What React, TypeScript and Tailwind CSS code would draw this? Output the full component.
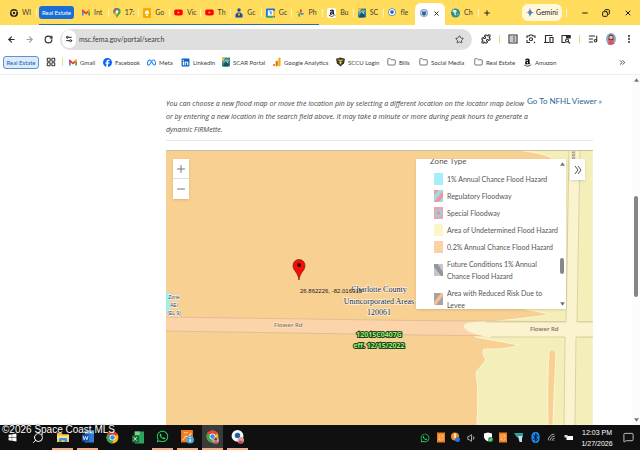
import type { ReactNode } from "react";
import {
  ArrowLeft, ArrowRight, RotateCw, Star, Puzzle, Plus, Minus, X, Copy, Folder,
  LayoutGrid, MessageSquare, Search, Volume1, Wifi, ChevronsRight, ListMusic,
  Settings2, EllipsisVertical,
} from "lucide-react";
import { FaFacebook, FaLinkedin, FaMeta, FaWhatsapp, FaAmazon, FaBluetooth, FaYoutube, FaWindows } from "react-icons/fa6";

const Gmail = () => (
  <svg viewBox="0 0 24 18" className="h-[7px] w-2 shrink-0">
    <path d="M0 3v15h5V8z" fill="#4285f4" /><path d="M24 3v15h-5V8z" fill="#34a853" />
    <path d="M0 2q0-3 4-1l8 7 8-7q4-2 4 1v4L12 15 0 6z" fill="#ea4335" />
    <path d="M19 2l2-2q3 0 3 3v3l-5 4z" fill="#fbbc04" />
  </svg>
);
const MapPin = () => (
  <svg viewBox="0 0 16 22" className="h-[10px] w-2 shrink-0">
    <path d="M8 22C6 15 0 13 0 8a8 8 0 0 1 16 0c0 5-6 7-8 14z" fill="#34a853" />
    <path d="M0 8a8 8 0 0 1 12-7L2 13Q0 10 0 8z" fill="#4285f4" />
    <path d="M1 4a8 8 0 0 1 5-4l2 5-4 4z" fill="#ea4335" />
    <path d="M2 13l5-6 4 4-6 7z" fill="#fbbc04" /><circle cx="8" cy="8" r="3" fill="#fff" />
  </svg>
);
const Keep = () => (
  <svg viewBox="0 0 16 20" className="h-[10px] w-2 shrink-0">
    <rect width="16" height="20" rx="2" fill="#f9ab00" /><circle cx="8" cy="9" r="4" fill="#fff" /><path d="M6 14h4v2H6z" fill="#fff" />
  </svg>
);
const Person = () => (
  <svg viewBox="0 0 16 20" className="h-[10px] w-2 shrink-0">
    <circle cx="8" cy="4" r="3.5" fill="#174ea6" /><path d="M1 19v-6l4-4h6l4 4v6z" fill="#174ea6" /><path d="M6 11h4v4H6z" fill="#fbbc04" />
  </svg>
);
const Calendar = () => (
  <svg viewBox="0 0 20 20" className="h-[10px] w-[9px] shrink-0">
    <rect width="20" height="20" rx="2" fill="#1a73e8" /><path d="M15 5h5v10l-5 5z" fill="#fbbc04" /><path d="M2 15h13v5H2z" fill="#34a853" />
    <rect x="4" y="4" width="12" height="12" fill="#fff" /><path d="M7 7h3v6M12 7v6" stroke="#1a73e8" strokeWidth="1.5" fill="none" />
  </svg>
);
const Photos = () => (
  <svg viewBox="0 0 20 20" className="h-[10px] w-2 shrink-0">
    <path d="M10 10V0q5 1 5 5t-5 5z" fill="#ea4335" /><path d="M10 10h10q-1 5-5 5t-5-5z" fill="#4285f4" />
    <path d="M10 10v10q-5-1-5-5t5-5z" fill="#34a853" /><path d="M10 10H0q1-5 5-5t5 5z" fill="#fbbc04" />
  </svg>
);
const AmazonBox = () => (
  <span className="flex h-[10px] w-[9px] shrink-0 items-center justify-center rounded-xs bg-white"><FaAmazon className="size-2 text-black" /></span>
);
const Scar = () => (
  <svg viewBox="0 0 18 20" className="h-[10px] w-2 shrink-0">
    <path d="M0 0h18v20H0z" fill="#2f8297" /><path d="M0 0h8L3 8H0z" fill="#e4c04a" /><path d="M9 3l8 2-5 6z" fill="#7fc46b" />
    <path d="M2 20l6-10 8 3-2 7z" fill="#17506b" /><path d="M1 12l7-6 6 7" stroke="#e9f2dc" strokeWidth="1.5" fill="none" />
  </svg>
);
const Seal = () => (
  <svg viewBox="0 0 20 20" className="h-[10px] w-2 shrink-0">
    <circle cx="10" cy="10" r="10" fill="#8fa9c8" /><circle cx="10" cy="10" r="7.5" fill="#c3d6ea" />
    <path d="M4 5q6 4 12 0l-2 4 1 4-5 4-5-4 1-4z" fill="#2c5c93" />
  </svg>
);
const Pointer = () => (
  <svg viewBox="0 0 20 24" className="h-[10px] w-2 shrink-0">
    <circle cx="10" cy="10" r="9" fill="#fff" stroke="#4c77b5" strokeWidth="2" /><path d="M6 6h8v5l-4 5-4-5z" fill="#1e5fb4" />
  </svg>
);
const Globe = ({ c }: { c: string }) => (
  <svg viewBox="0 0 20 20" className="h-[10px] w-[9px] shrink-0">
    <circle cx="10" cy="10" r="10" fill={c} /><path d="M5 3q8-1 8 4l-3 3 2 6-4-2-1-5-4-2z" fill="#e1f1dd" /><path d="M14 10q4 0 3 3l-3 3z" fill="#8ac47a" />
  </svg>
);
const Chrome = ({ face }: { face?: boolean }) => (
  <svg viewBox="0 0 24 26" className="h-[14px] w-[13px]">
    <circle cx="12" cy="12" r="11" fill="#fbbc04" /><path d="M12 12L2.500 6.500a11 11 0 0 1 19 0z" fill="#ea4335" />
    <path d="M12 12L2.500 6.500A11 11 0 0 0 11 23l5-9z" fill="#34a853" />
    <circle cx="12" cy="12" r="5.500" fill="#fff" /><circle cx="12" cy="12" r="4.200" fill="#4285f4" />
    {face && <><circle cx="18" cy="19" r="6" fill="#c9a4a0" /><circle cx="18" cy="17" r="2.500" fill="#6d4545" /><path d="M15 21l6 0 1 4h-8z" fill="#d5596b" /></>}
  </svg>
);
const Face = () => (
  <svg viewBox="0 0 20 24" className="h-3 w-[10px]">
    <ellipse cx="10" cy="12" rx="10" ry="12" fill="#8fabc8" /><path d="M5 9a5 6 0 0 1 10 0v6H5z" fill="#6b3b35" />
    <circle cx="10" cy="9" r="3.500" fill="#f0c3a8" /><path d="M3 22l4-8h6l4 7q-7 5-14 1z" fill="#d95566" />
  </svg>
);
const ToolIcon = ({ children }: { children: ReactNode }) => (
  <svg viewBox="0 0 20 20" className="size-[10px]" fill="none" stroke="currentColor" strokeWidth="2.200">{children}</svg>
);

const tabs: { icon: ReactNode; text: string }[] = [
  { icon: <Gmail />, text: "Int" }, { icon: <MapPin />, text: "17:" }, { icon: <Keep />, text: "Go" },
  { icon: <FaYoutube className="size-[9px] shrink-0 text-[#f00]" />, text: "Vic" },
  { icon: <FaYoutube className="size-[9px] shrink-0 text-[#f00]" />, text: "Th" },
  { icon: <Person />, text: "Gc" }, { icon: <Calendar />, text: "Gc" }, { icon: <Photos />, text: "Ph" },
  { icon: <AmazonBox />, text: "Bu" }, { icon: <Scar />, text: "SC" }, { icon: <Pointer />, text: "fle" },
];

const FolderIcon = () => <Folder className="h-[10px] w-[9px] shrink-0 text-[#4b4b4b]" />;
const bookmarks: { icon: ReactNode; text: string; w: string }[] = [
  { icon: <Gmail />, text: "Gmail", w: "w-[34px]" },
  { icon: <FaFacebook className="size-[9px] shrink-0 text-[#0866ff]" />, text: "Facebook", w: "w-11" },
  { icon: <FaMeta className="size-[9px] shrink-0 text-[#0a7cf5]" />, text: "Meta", w: "w-[34px]" },
  { icon: <FaLinkedin className="size-[9px] shrink-0 text-[#0a66c2]" />, text: "LinkedIn", w: "w-[41px]" },
  { icon: <Scar />, text: "SCAR Portal", w: "w-[51px]" },
  {
    icon: <svg viewBox="0 0 18 20" className="h-[10px] w-2 shrink-0"><rect x="12" width="5" height="20" rx="2.500" fill="#f9ab00" /><rect x="6" y="7" width="5" height="13" rx="2.500" fill="#e37400" /><circle cx="2.500" cy="17" r="2.500" fill="#e37400" /></svg>,
    text: "Google Analytics", w: "w-[63px]",
  },
  {
    icon: <svg viewBox="0 0 20 20" className="h-[10px] w-[9px] shrink-0"><path d="M0 3l10-3 10 3-2 10-8 7-8-7z" fill="#3c3c22" /><path d="M3 5h14l-7 5z" fill="#d8b740" /><path d="M7 10h6l-3 6z" fill="#e8d57c" /></svg>,
    text: "SCCU Login", w: "w-[51px]",
  },
  { icon: <FolderIcon />, text: "Bills", w: "w-8" },
  { icon: <FolderIcon />, text: "Social Media", w: "w-[55px]" },
  { icon: <FolderIcon />, text: "Real Estate", w: "w-[49px]" },
  { icon: <FaAmazon className="size-[9px] shrink-0 text-black" />, text: "Amazon", w: "w-10" },
];

const legend: { text: string; swatch: ReactNode }[] = [
  { text: "1% Annual Chance Flood Hazard", swatch: <path d="M0 0h10v12H0z" fill="#a5effd" /> },
  { text: "Regulatory Floodway", swatch: <><path d="M0 0h10v12H0z" fill="#a3d9e2" /><path d="M0 5L5 0H0zM0 12L10 1v6l-5 5z" fill="#f0959b" /></> },
  { text: "Special Floodway", swatch: <><path d="M0 0h10v12H0z" fill="#f0a3a8" /><circle cx="5" cy="6" r="4" fill="#8fd5e2" /><circle cx="5" cy="6" r="2" fill="#f0959b" /></> },
  { text: "Area of Undetermined Flood Hazard", swatch: <path d="M0 0h10v12H0z" fill="#fbf6c8" /> },
  { text: "0.2% Annual Chance Flood Hazard", swatch: <path d="M0 0h10v12H0z" fill="#fdd0a5" /> },
  { text: "Future Conditions 1% Annual Chance Flood Hazard", swatch: <><path d="M0 0h10v12H0z" fill="#c5c7cc" /><path d="M0 0h4l6 8v4H8L0 3z" fill="#94969c" /></> },
  { text: "Area with Reduced Risk Due to Levee", swatch: <><path d="M0 0h10v12H0z" fill="#a5a3a5" /><path d="M0 9L8 0h2v3L2 12H0z" fill="#f5c096" /></> },
];

const Sep = ({ c }: { c: string }) => <span className={`h-2 w-px shrink-0 ${c}`} />;

function Browser() {
  return (
    <header className="shrink-0 text-[7px] text-[#3c3c3c]">
      <div className="flex h-[25px] items-center bg-[#ffdc5c]">
        <div className="flex w-[39px] shrink-0 items-center gap-1 pl-[10px]">
          <svg viewBox="0 0 20 20" className="size-2 shrink-0"><circle cx="10" cy="10" r="8" fill="none" stroke="#222" strokeWidth="4" /><circle cx="10" cy="10" r="3" fill="#222" /><path d="M10 6h9M6 12L2 5M13 12l-4 7" stroke="#ffdc5c" strokeWidth="1.500" /></svg>
          <span className="w-[10px] whitespace-nowrap">Wl</span>
          <Sep c="bg-[#fff3bf]" />
        </div>
        <div className="flex h-[25px] min-w-0 flex-1 items-center">
          <button className="flex h-[13px] w-[35px] shrink-0 items-center justify-center whitespace-nowrap rounded-[3px] bg-[#1a6fd6] text-[6px] text-white">Real Estate</button>
          <div className="relative flex h-[25px] min-w-0 flex-1 items-center pl-1">
            {tabs.map((t, i) => (
              <button key={i} className="flex min-w-0 flex-1 items-center gap-1 pl-1">
                {t.icon}
                <span className="min-w-0 flex-1 whitespace-nowrap text-left">{t.text}</span>
                {i < tabs.length - 1 && <Sep c="bg-[#fff3bf]" />}
              </button>
            ))}
            <span className="absolute right-24 bottom-0 -left-[35px] h-px bg-[#2a6ba5]" />
          </div>
        </div>
        <div className="flex h-[22px] w-[30px] shrink-0 items-center justify-between self-end rounded-t-md bg-white px-[5px] pb-[2px]">
          <Seal />
          <button aria-label="Close tab"><X className="size-[7px] text-[#222]" strokeWidth={3} /></button>
        </div>
        <div className="flex w-[77px] shrink-0 items-center gap-1 pl-[6px]">
          <Globe c="#2d8f8b" /><span className="w-[10px] whitespace-nowrap">Ch</span><Sep c="bg-[#fff3bf]" />
          <button aria-label="New tab"><Plus className="size-2 text-[#222]" strokeWidth={3} /></button>
        </div>
        <button className="flex h-[17px] w-10 shrink-0 items-center justify-center gap-[2px] rounded-md bg-[#fff8dc] text-[#1c1c1c]">
          <svg viewBox="0 0 20 24" className="h-[9px] w-2 shrink-0"><path d="M10 0q1 10 10 12-9 2-10 12Q9 14 0 12 9 10 10 0z" fill="#3b82e8" /><path d="M10 0q1 10 4 10l-8 0q3 0 4-10z" fill="#e5484d" /><path d="M0 12l6-2v4z" fill="#f5b82e" /><path d="M10 24q-1-8-3-10h5q-2 4-2 10z" fill="#34a853" /></svg>
          Gemini
        </button>
        <div className="flex w-[78px] shrink-0 items-center justify-between pr-2 pl-1 text-[#1c1c1c]">
          <Sep c="bg-[#fff3bf]" />
          <button aria-label="Minimize" className="pl-2"><Minus className="size-2" strokeWidth={3} /></button>
          <button aria-label="Restore" className="pl-2"><Copy className="size-2 -scale-x-100" strokeWidth={3} /></button>
          <button aria-label="Close" className="pl-2"><X className="size-2" strokeWidth={3} /></button>
        </div>
      </div>
      <div className="flex h-[25px] items-center pt-[3px] text-[#2b2b2b]">
        <div className="flex w-[60px] shrink-0 items-center justify-around px-[2px]">
          <button aria-label="Back"><ArrowLeft className="size-[9px]" strokeWidth={3} /></button>
          <button aria-label="Forward"><ArrowRight className="size-[9px] text-[#a0a0a0]" strokeWidth={3} /></button>
          <button aria-label="Reload"><RotateCw className="size-[9px]" strokeWidth={3} /></button>
        </div>
        <div className="flex h-[21px] min-w-0 flex-1 items-center rounded-full bg-[#dfdfdf] px-[2px]">
          <span className="flex h-[18px] w-[14px] shrink-0 items-center justify-center rounded-full bg-white"><Settings2 className="size-2" strokeWidth={3} /></span>
          <input aria-label="Address" className="h-[18px] min-w-0 flex-1 bg-transparent pl-[3px] text-[7px] text-[#3b3b3b] outline-none" defaultValue="msc.fema.gov/portal/search" />
          <button aria-label="Bookmark" className="pr-[6px]"><Star className="size-[9px]" strokeWidth={2} /></button>
        </div>
        <div className="flex w-[168px] shrink-0 items-center justify-between pr-[6px] pl-[9px]">
          <button aria-label="Extensions"><Puzzle className="size-[10px]" strokeWidth={2.5} /></button>
          <Sep c="bg-[#eadb7a]" />
          <button aria-label="Reading list"><ToolIcon><path d="M2 2h16v16H2zM5 6h2M9 6h6M5 10h2M9 10h6M5 14h2M9 14h6" /></ToolIcon></button>
          <button aria-label="Lens"><ToolIcon><path d="M2 8V4h4l2-2h4l2 2h4v4M2 12v5h6M16 16l2 2" /><circle cx="10" cy="10.500" r="3" /></ToolIcon></button>
          <button aria-label="Devices"><ToolIcon><path d="M3 16V3h14M0 17h10M12 7h6v10h-6z" /></ToolIcon></button>
          <button aria-label="Search page"><ToolIcon><path d="M9 17H2V3h16v5" /><path d="M11 3h7v5h-7z" fill="currentColor" /><circle cx="12" cy="13" r="3" /><path d="M14 15l4 4" /></ToolIcon></button>
          <Sep c="bg-[#eadb7a]" />
          <button aria-label="Media"><ListMusic className="size-[10px]" strokeWidth={2.5} /></button>
          <button aria-label="Profile"><Face /></button>
          <button aria-label="Menu"><EllipsisVertical className="size-[10px]" strokeWidth={3} /></button>
        </div>
      </div>
      <nav className="flex h-[25px] items-center border-b border-[#eeeeee] pl-[3px] text-[6px] whitespace-nowrap">
        <button className="flex h-[13px] w-9 shrink-0 items-center justify-center rounded-[3px] border border-[#5b93d3] bg-[#dcebfc] text-[#1c5ca8]">Real Estate</button>
        <LayoutGrid className="ml-[7px] size-[10px] shrink-0 text-[#333]" strokeWidth={2.5} />
        <span className="flex w-[13px] shrink-0 justify-center"><Sep c="bg-[#f0dc7a]" /></span>
        {bookmarks.map((b) => (
          <a key={b.text} href="#" className={`flex shrink-0 items-center gap-[3px] ${b.w}`}>{b.icon}<span>{b.text}</span></a>
        ))}
        <button aria-label="More bookmarks" className="mr-[13px] ml-auto"><ChevronsRight className="size-[9px]" strokeWidth={2.5} /></button>
      </nav>
    </header>
  );
}

function FloodMap() {
  return (
    <div className="relative min-h-0 flex-1 overflow-hidden bg-[#f8d092]">
      <svg viewBox="0 0 427 275" preserveAspectRatio="xMinYMin slice" className="absolute inset-0 h-full w-full">
        <path d="M0 0h427v275H0z" fill="#f8d092" />
        <path d="M350 0Q386 4 386 10L340 30V150L359 159Q385 164 382 165Q345 170 300 174Q296 180 310 187L353 195Q340 200 318 199Q315 203 320 210Q318 213 310 222Q313 240 311 275H427V0z" fill="#f4efb8" stroke="#fcf5da" strokeWidth="1" />
        <path d="M383 202Q388 196 390 205Q388 240 387 275H382Q381 230 383 202z" fill="#f8d092" stroke="#fcf5da" />
        <path d="M0 167L250 170.500 427 173V187L250 185 0 181z" fill="#fdd3aa" />
        <path d="M0 167L250 170.500 427 172M0 181L250 185 427 187" fill="none" stroke="#dfbf94" />
        <path d="M427 172H330Q294 170 298 178Q303 184 322 187H427z" fill="#fbf3cf" />
        <path d="M403 0L398 275H409L414 0z" fill="#fbf3cf" />
        <path d="M403 0L400 172H320M414 0L411 172H427M325 187H399L398 275M427 187H410L409 275" fill="none" stroke="#d9d3a2" />
        <path d="M0 142h4v20H0z" fill="#a2f0e5" />
        <path d="M0 .5h427" stroke="#c9c3a1" />
        <path d="M133 130C132 122 127 121 127 115.500a6 6 0 0 1 12 0C139 121 134 122 133 130z" fill="#f40d05" stroke="#7d1b10" strokeWidth=".7" />
        <circle cx="133" cy="115" r="2" fill="#220c0c" />
        <g fontFamily="Liberation Serif, serif" fontSize="8" textAnchor="middle" fill="#191919" stroke="#fff" strokeWidth="1" paintOrder="stroke">
          <text x="213" y="142">Charlotte County</text><text x="213" y="154">Unincorporated Areas</text><text x="213" y="165">120061</text>
        </g>
        <g fontFamily="Liberation Sans, sans-serif" fontSize="5" textAnchor="middle" stroke="#fff" strokeWidth="1" paintOrder="stroke" fill="#28365b">
          <text x="8" y="149">Zone</text><text x="8" y="157">AE/</text><text x="8" y="165">(EL 9)</text>
        </g>
        <text x="134" y="143" fontFamily="Liberation Sans, sans-serif" fontSize="6" fill="#222">26.862226, -82.016315</text>
        <g fontFamily="Open Sans, sans-serif" fontSize="6" fontWeight="600" fill="#84705c" stroke="#fdebd0" strokeWidth="1" paintOrder="stroke">
          <text x="108" y="177">Flower Rd</text><text x="364" y="181">Flower Rd</text>
          <text x="0" y="0" fontSize="5" textAnchor="end" transform="translate(409 1) rotate(-90)">oos</text>
        </g>
        <g fontFamily="Open Sans, sans-serif" fontSize="7" fontWeight="700" textAnchor="middle" fill="#8cf56b" stroke="#263f21" strokeWidth="2" paintOrder="stroke">
          <text x="213" y="187">12015C0407G</text><text x="213" y="198">eff. 12/15/2022</text>
        </g>
      </svg>
      <div className="absolute top-[9px] left-[7px] flex w-4 flex-col bg-white text-[#777] shadow-sm">
        <button aria-label="Zoom in" className="flex h-5 items-center justify-center border-b border-[#ddd]"><Plus className="size-3" strokeWidth={2} /></button>
        <button aria-label="Zoom out" className="flex h-5 items-center justify-center"><Minus className="size-3" strokeWidth={2} /></button>
      </div>
      <button aria-label="Collapse legend" className="absolute top-[9px] right-2 flex h-[21px] w-[15px] items-center justify-center bg-white text-[#555] shadow-sm">
        <svg viewBox="0 0 8 10" className="h-[10px] w-2" fill="none" stroke="currentColor" strokeWidth="1"><path d="M1 1l3 4-3 4M4 1l3 4-3 4" /></svg>
      </button>
      <section className="absolute top-[9px] right-[27px] flex h-[150px] w-[150px] overflow-hidden bg-white shadow-sm">
        <div className="min-w-0 flex-1 pl-[14px] text-[#555]">
          <h2 className="text-[8px] leading-[5px]">Zone Type</h2>
          <ul className="flex flex-col gap-[5px] pt-[9px] pl-1 text-[7px] leading-[12px]">
            {legend.map((l) => (
              <li key={l.text} className="flex items-center gap-1">
                <svg viewBox="0 0 10 12" preserveAspectRatio="none" className="h-3 w-[9px] shrink-0">{l.swatch}</svg>
                <span className={l.text.length > 34 ? "w-[98px]" : "whitespace-nowrap"}>{l.text}</span>
              </li>
            ))}
          </ul>
        </div>
        <div className="flex w-2 flex-col items-center py-[3px] text-[#777]">
          <svg viewBox="0 0 6 4" className="h-1 w-[5px]"><path d="M3 0l3 4H0z" fill="currentColor" /></svg>
          <span className="mt-[92px] h-4 w-1 rounded-full bg-[#888]" />
          <svg viewBox="0 0 6 4" className="mt-auto h-1 w-[5px]"><path d="M0 0h6L3 4z" fill="currentColor" /></svg>
        </div>
      </section>
    </div>
  );
}

const running = "border-b-2 border-[#f2ae85]";
const apps: { icon: ReactNode; name: string; cls: string }[] = [
  { name: "Start", cls: "", icon: <FaWindows className="size-[9px] text-white" /> },
  { name: "Search", cls: "", icon: <Search className="size-3 -scale-x-100 text-white" /> },
  { name: "Explorer", cls: running, icon: <svg viewBox="0 0 22 20" className="h-3 w-3"><path d="M0 2h8l2 3h12v14H0z" fill="#f7c948" /><path d="M0 8h22v6H0z" fill="#fde08a" /><path d="M4 12h14v7h-4v-3H8v3H4z" fill="#3a95e4" /></svg> },
  { name: "Word", cls: running, icon: <svg viewBox="0 0 22 22" className="h-[13px] w-3"><path d="M5 0h17v22H5z" fill="#2f7bdc" /><path d="M5 0h17v6H5z" fill="#7cb9f5" /><path d="M0 7h13v13H0z" fill="#174ea6" /><path d="M2 10l2 7 2.500-6L9 17l2-7" stroke="#fff" strokeWidth="1.500" fill="none" /></svg> },
  { name: "Chrome", cls: "", icon: <Chrome /> },
  { name: "Excel", cls: "", icon: <svg viewBox="0 0 22 22" className="h-[13px] w-3"><path d="M5 0h17v22H5z" fill="#2fa35f" /><path d="M5 0h9v7H5z" fill="#7bd38b" /><path d="M0 7h13v13H0z" fill="#156b38" /><path d="M3 10l6 7M9 10l-6 7" stroke="#fff" strokeWidth="1.500" /></svg> },
  { name: "WhatsApp", cls: running, icon: <FaWhatsapp className="size-[13px] text-[#2bd566]" /> },
  { name: "Updates", cls: running, icon: <svg viewBox="0 0 24 26" className="h-[14px] w-[13px]"><path d="M0 0h22v23H0z" fill="#ee7d20" /><path d="M3 19l6-8 4 3 6-9M5 5h8" stroke="#fbd5ae" strokeWidth="2" fill="none" /><circle cx="17" cy="18" r="7" fill="#4da6d9" /><path d="M17 17v5M17 13v2" stroke="#fff" strokeWidth="2.500" /></svg> },
  { name: "Chrome profile", cls: `${running} bg-[#3a3a3a]`, icon: <Chrome face /> },
  { name: "Assistant", cls: running, icon: <svg viewBox="0 0 24 26" className="h-[14px] w-[13px]"><circle cx="12" cy="11" r="11" fill="#f5f8fb" /><circle cx="12" cy="10" r="5" fill="#1f5fa8" /><circle cx="18" cy="19" r="6" fill="#d89ea0" /><path d="M15 20h6l1 5h-8z" fill="#c6485b" /></svg> },
];

function OrangeTray() {
  return <svg viewBox="0 0 16 20" className="h-[11px] w-2"><path d="M0 0h16v20H0z" fill="#f07d1e" /><path d="M4 5h8v10H4zM4 15l8-10" stroke="#ffd2a0" strokeWidth="1.500" fill="none" /></svg>;
}

function Taskbar() {
  return (
    <footer className="relative flex h-[25px] shrink-0 items-center bg-[#101010] text-white">
      <div className="flex h-full">
        {apps.map((a) => (
          <button key={a.name} aria-label={a.name} className="flex h-full w-[25px] items-center justify-center px-[2px]">
            <span className={`flex h-full w-full items-center justify-center ${a.cls}`}>{a.icon}</span>
          </button>
        ))}
      </div>
      <div className="ml-auto flex w-[156px] items-center justify-between pr-[2px]">
        <FaWhatsapp className="size-[10px] text-[#2bd566]" />
        <OrangeTray />
        <svg viewBox="0 0 18 20" className="h-[11px] w-[9px]"><circle cx="8" cy="8" r="8" fill="#f18a2b" /><path d="M8 2v8l4 4" stroke="#fff" strokeWidth="3" fill="none" /><circle cx="13" cy="14" r="5" fill="#2477d4" /></svg>
        <Volume1 className="size-[10px] text-[#ddd]" />
        <svg viewBox="0 0 18 20" className="h-[11px] w-[9px]"><path d="M0 2l8-2 8 2v8q-2 6-8 8-6-2-8-8z" fill="#fff" /><circle cx="13" cy="14" r="5" fill="#2ba24c" /><path d="M10 14l2 2 4-4" stroke="#fff" strokeWidth="1.500" fill="none" /></svg>
        <OrangeTray />
        <svg viewBox="0 0 18 20" className="h-[11px] w-[9px]"><path d="M0 1h18v9H6z" fill="#27a397" /><path d="M8 7h8v12h-5z" fill="#c9dde5" /></svg>
        <FaBluetooth className="size-[11px] text-[#1687f0]" />
        <Wifi className="size-[10px] -rotate-45 text-[#bbb]" />
        <svg viewBox="0 0 20 14" className="h-2 w-[10px]"><path d="M5 3h13v8H5z" fill="#fff" /><path d="M1 1h6v5H1z" fill="#ddd" /></svg>
      </div>
      <time className="w-[42px] text-center font-[Liberation_Sans,sans-serif] text-[7px] leading-[11px]">12:03 PM<br />1/27/2026</time>
      <button aria-label="Notifications" className="flex w-[22px] items-center pl-[5px]"><MessageSquare className="size-[11px] text-[#ccc]" strokeWidth={2} /></button>
      <p className="absolute -top-[1px] left-[2px] font-[Liberation_Sans,sans-serif] text-[10px] leading-[12px] whitespace-nowrap text-white [text-shadow:0_0_2px_#000]">©2026 Space Coast MLS</p>
    </footer>
  );
}

export default function App() {
  return (
    <div className="flex h-screen flex-col overflow-hidden bg-white font-[Lato,sans-serif]">
      <Browser />
      <div className="flex min-h-0 flex-1">
        <main className="flex min-w-0 flex-1 flex-col pr-[39px] pl-[166px]">
          <div className="flex gap-2 pt-[22px]">
            <p className="min-w-0 flex-1 font-['Open_Sans',sans-serif] text-[7px] leading-[13px] whitespace-nowrap text-[#444] italic">
              You can choose a new flood map or move the location pin by selecting a different location on the locator map below<br />
              or by entering a new location in the search field above. It may take a minute or more during peak hours to generate a<br />
              dynamic FIRMette.
            </p>
            <a href="#" className="-mr-2 w-[74px] shrink-0 text-[8px] leading-[9px] whitespace-nowrap text-[#1f6591]">Go To NFHL Viewer »</a>
          </div>
          <hr className="mt-1 mb-[9px] border-[#e9e9e9]" />
          <FloodMap />
        </main>
        <div className="flex w-2 shrink-0 flex-col items-center bg-[#fcfcfc] py-[3px] text-[#777]">
          <svg viewBox="0 0 6 4" className="h-1 w-[5px]"><path d="M3 0l3 4H0z" fill="currentColor" /></svg>
          <span className="mt-[114px] h-[101px] w-1 rounded-full bg-[#858585]" />
          <svg viewBox="0 0 6 4" className="mt-auto h-1 w-[5px]"><path d="M0 0h6L3 4z" fill="currentColor" /></svg>
        </div>
      </div>
      <Taskbar />
    </div>
  );
}
